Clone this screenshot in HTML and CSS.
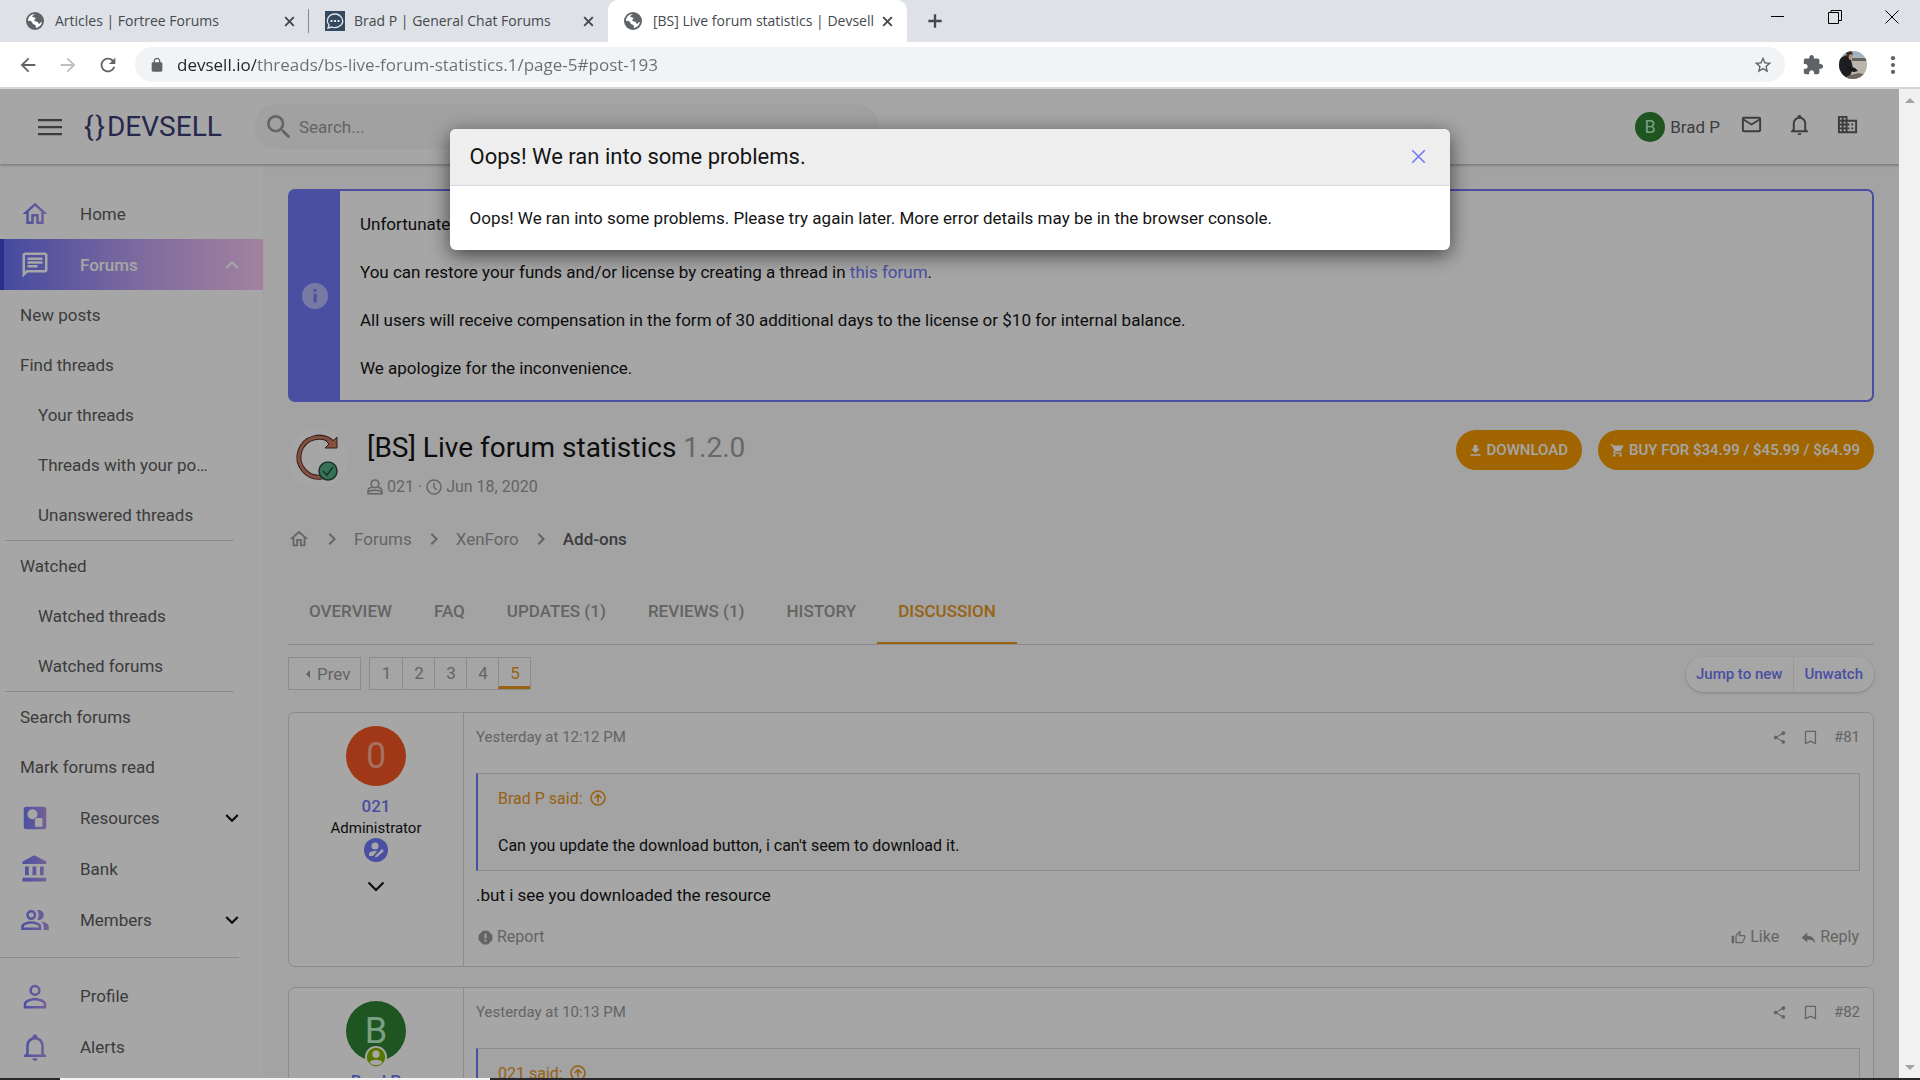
FILE: index.html
```html
<!DOCTYPE html>
<html lang="en">
<head>
  <meta charset="UTF-8"/>
  <meta name="viewport" content="width=device-width, initial-scale=1.0"/>
  <title>[BS] Live forum statistics | Devsell</title>
  <link rel="stylesheet" href="styles.css">
</head>
<body>
<!-- icon set -->
<svg class="sprite" aria-hidden="true">
  <linearGradient id="navFill" x1="0" y1="0" x2="1" y2="0">
    <stop offset="0" stop-color="#727af9"/>
    <stop offset="1" stop-color="#b494e8"/>
  </linearGradient>
  <symbol id="globe" viewBox="0 0 24 24"><circle cx="12" cy="12" r="12"/><path fill="#fff" d="M12 2.600c-2 1.600-4 2.200-3.500 3.800.5 1.400 3.500.2 4 1.800.4 1.400-1.800 1.600-1.600 3.200.2 1.400 2.600.8 4 1.600 1.600 1 1.200 2.600 2.600 2.600s1.800-2.400 3.700-2.200c-.6 4-4 7.600-8.500 8 1-2 .6-3.400-.6-4.200-1.600-1-3-.6-3.600-2.400-.4-1.400-1.200-2.400-2.800-2.800l-3.100-.4C2.600 6.800 6.800 2.400 12 2.600z"/></symbol>
  <symbol id="cross" viewBox="0 0 24 24"><path fill="none" stroke="currentColor" stroke-width="3.600" d="M4 4l16 16M20 4L4 20"/></symbol>
  <symbol id="thincross" viewBox="0 0 24 24"><path fill="none" stroke="currentColor" stroke-width="2.600" d="M2 2l20 20M22 2L2 22"/></symbol>
  <symbol id="plus" viewBox="0 0 24 24"><path fill="none" stroke="currentColor" stroke-width="3.500" d="M12 2v20M2 12h20"/></symbol>
  <symbol id="back" viewBox="0 0 24 24"><path d="M20 11H7.830l5.590-5.590L12 4l-8 8 8 8 1.410-1.410L7.830 13H20v-2z"/></symbol>
  <symbol id="forward" viewBox="0 0 24 24"><path d="M12 4l-1.410 1.410L16.170 11H4v2h12.170l-5.580 5.590L12 20l8-8z"/></symbol>
  <symbol id="reload" viewBox="0 0 24 24"><path d="M17.650 6.350C16.200 4.900 14.210 4 12 4c-4.420 0-7.990 3.580-7.990 8s3.570 8 7.990 8c3.730 0 6.840-2.550 7.730-6h-2.080c-.82 2.330-3.040 4-5.650 4-3.310 0-6-2.690-6-6s2.690-6 6-6c1.660 0 3.140.69 4.220 1.780L13 11h7V4l-2.350 2.350z"/></symbol>
  <symbol id="lock" viewBox="0 0 24 24"><path d="M18 8h-1V6c0-2.760-2.240-5-5-5S7 3.240 7 6v2H6c-1.100 0-2 .9-2 2v10c0 1.100.9 2 2 2h12c1.100 0 2-.9 2-2V10c0-1.100-.9-2-2-2zm-2.900 0H8.900V6c0-1.710 1.390-3.100 3.100-3.100s3.100 1.390 3.100 3.100v2z"/></symbol>
  <symbol id="star" viewBox="0 0 24 24"><path d="M22 9.240l-7.190-.62L12 2 9.190 8.630 2 9.240l5.460 4.730L5.820 21 12 17.270 18.180 21l-1.630-7.030L22 9.240zM12 15.400l-3.760 2.270 1-4.280-3.320-2.880 4.380-.38L12 6.100l1.710 4.040 4.380.38-3.320 2.880 1 4.280L12 15.400z"/></symbol>
  <symbol id="puzzle" viewBox="0 0 24 24"><path d="M20.500 11H19V7c0-1.100-.9-2-2-2h-4V3.500C13 2.120 11.880 1 10.500 1S8 2.120 8 3.500V5H4c-1.100 0-1.990.9-1.990 2v3.800H3.500c1.490 0 2.700 1.210 2.700 2.700s-1.210 2.700-2.700 2.700H2V20c0 1.100.9 2 2 2h3.800v-1.500c0-1.490 1.210-2.700 2.700-2.700s2.700 1.210 2.700 2.700V22H17c1.100 0 2-.9 2-2v-4h1.500c1.380 0 2.500-1.120 2.500-2.500S21.880 11 20.500 11z"/></symbol>
  <symbol id="dots" viewBox="0 0 24 24"><circle cx="12" cy="4.500" r="2.300"/><circle cx="12" cy="12" r="2.300"/><circle cx="12" cy="19.500" r="2.300"/></symbol>
  <symbol id="home" viewBox="0 0 24 24"><path d="M12 5.690l5 4.500V18h-2v-6H9v6H7v-7.810l5-4.500M12 3L2 12h3v8h6v-6h2v6h6v-8h3L12 3z"/></symbol>
  <symbol id="chat" viewBox="0 0 24 24"><path d="M20 2H4c-1.100 0-2 .9-2 2v18l4-4h14c1.100 0 2-.9 2-2V4c0-1.100-.9-2-2-2zm0 14H5.200L4 17.200V4h16v12zM6 12h8v2H6zm0-3h12v2H6zm0-3h12v2H6z"/></symbol>
  <symbol id="shapes" viewBox="0 0 24 24"><path fill-rule="evenodd" d="M5 3h14a2 2 0 0 1 2 2v14a2 2 0 0 1-2 2H5a2 2 0 0 1-2-2V5a2 2 0 0 1 2-2zM10 5a4 4 0 1 0 0 8 4 4 0 0 0 0-8zM12 13v6h6v-7h-4.500z"/></symbol>
  <symbol id="bank" viewBox="0 0 24 24"><path d="M4 10v7h3v-7H4zm6 0v7h3v-7h-3zM2 22h19v-3H2v3zm14-12v7h3v-7h-3zm-4.500-9L2 6v2h19V6l-9.500-5z"/></symbol>
  <symbol id="people" viewBox="0 0 24 24"><path d="M16.670 13.130C18.040 14.060 19 15.320 19 17v3h4v-3c0-2.180-3.570-3.470-6.330-3.870zM9 12c2.210 0 4-1.790 4-4s-1.790-4-4-4-4 1.790-4 4 1.790 4 4 4zm0-6c1.100 0 2 .9 2 2s-.9 2-2 2-2-.9-2-2 .9-2 2-2zM15 12c2.210 0 4-1.790 4-4s-1.790-4-4-4c-.47 0-.91.100-1.330.24C14.500 5.270 15 6.580 15 8s-.5 2.730-1.330 3.760c.42.140.86.240 1.330.24zM9 13c-2.670 0-8 1.340-8 4v3h16v-3c0-2.660-5.330-4-8-4zm6 5H3v-.99C3.200 16.290 6.300 15 9 15s5.800 1.290 6 2v1z"/></symbol>
  <symbol id="person" viewBox="0 0 24 24"><path d="M12 3a4.500 4.500 0 1 0 0 9 4.500 4.500 0 0 0 0-9zm0 2a2.500 2.500 0 1 1 0 5 2.500 2.500 0 0 1 0-5zm0 8.500c-4 0-9 1.700-9 5V22h18v-3.500c0-3.300-5-5-9-5zm0 2c3.500 0 7 1.500 7 3V20H5v-1.500c0-1.500 3.500-3 7-3z"/></symbol>
  <symbol id="bell" viewBox="0 0 24 24"><path d="M10 21h4a2 2 0 0 1-4 0zM21 19v1H3v-1l2-2v-6c0-3.100 2.030-5.830 5-6.710V4a2 2 0 0 1 4 0v.29c2.970.88 5 3.610 5 6.710v6l2 2m-4-8a5 5 0 0 0-10 0v7h10v-7z"/></symbol>
  <symbol id="down" viewBox="0 0 24 24"><path d="M7.410 8.590L12 13.170l4.590-4.580L18 10l-6 6-6-6z"/></symbol>
  <symbol id="thindown" viewBox="0 0 24 24"><path fill="none" stroke="currentColor" stroke-width="2.800" d="M2 6l10 10L22 6"/></symbol>
  <symbol id="up" viewBox="0 0 24 24"><path d="M7.410 15.410L12 10.830l4.590 4.580L18 14l-6-6-6 6z"/></symbol>
  <symbol id="right" viewBox="0 0 24 24"><path d="M8.590 16.590L13.170 12 8.590 7.410 10 6l6 6-6 6z"/></symbol>
  <symbol id="search" viewBox="0 0 24 24"><path d="M15.500 14h-.79l-.28-.27A6.470 6.470 0 0 0 16 9.500 6.500 6.500 0 1 0 9.500 16c1.610 0 3.090-.59 4.230-1.570l.27.280v.79l5 4.990L20.490 19l-4.990-5zm-6 0C7.010 14 5 11.990 5 9.500S7.010 5 9.500 5 14 7.010 14 9.500 11.990 14 9.500 14z"/></symbol>
  <symbol id="menu" viewBox="0 0 24 24"><path d="M0 4h24v2.200H0zM0 11h24v2.200H0zM0 18h24v2.200H0z"/></symbol>
  <symbol id="mail" viewBox="0 0 24 24"><path d="M20 4H4c-1.100 0-2 .9-2 2v12c0 1.100.9 2 2 2h16c1.100 0 2-.9 2-2V6c0-1.100-.9-2-2-2zm0 14H4V8l8 5 8-5v10zm-8-7L4 6h16l-8 5z"/></symbol>
  <symbol id="building" viewBox="0 0 24 24"><path d="M12 7V3H2v18h20V7H12zM6 19H4v-2h2v2zm0-4H4v-2h2v2zm0-4H4V9h2v2zm0-4H4V5h2v2zm4 12H8v-2h2v2zm0-4H8v-2h2v2zm0-4H8V9h2v2zm0-4H8V5h2v2zm10 12h-8v-2h2v-2h-2v-2h2v-2h-2V9h8v10zm-2-8h-2v2h2v-2zm0 4h-2v2h2v-2z"/></symbol>
  <symbol id="info" viewBox="0 0 24 24"><path d="M12 0a12 12 0 1 0 0 24 12 12 0 0 0 0-24zm1.500 18h-2.800v-8h2.800v8zm0-10h-2.800V5.500h2.800V8z"/></symbol>
  <symbol id="user" viewBox="0 0 24 24"><path fill="none" stroke="currentColor" stroke-width="2.200" d="M12 1.500a5.800 5.800 0 1 0 0 11.600 5.800 5.800 0 0 0 0-11.600zM7.500 12.500c-3.500.5-6 2.500-6 6v3.500h21v-3.500c0-3.500-2.500-5.500-6-6M2.500 19c6-2.600 13-2.600 19 0"/></symbol>
  <symbol id="clock" viewBox="0 0 24 24"><path fill="none" stroke="currentColor" stroke-width="2.200" d="M12 1.500a10.500 10.500 0 1 0 0 21 10.500 10.500 0 0 0 0-21zM12 5.500v7l4 3.500"/></symbol>
  <symbol id="download" viewBox="0 0 24 24"><path d="M19 9h-4V3H9v6H5l7 7 7-7zM4 18v2.500h16V18H4z"/></symbol>
  <symbol id="cart" viewBox="0 0 24 24"><path d="M7 18a2 2 0 1 0 0 4 2 2 0 0 0 0-4zM1 2v2h2l3.600 7.590-1.350 2.450C4.520 15.370 5.480 17 7 17h12v-2H7.420l1.130-2h7.450c.75 0 1.410-.41 1.750-1.030L21.700 4H5.210l-.94-2H1zm16 16a2 2 0 1 0 0 4 2 2 0 0 0 0-4z"/></symbol>
  <symbol id="share" viewBox="0 0 24 24"><path d="M18 16.080c-.76 0-1.440.3-1.960.77L8.910 12.700c.05-.23.090-.46.090-.7s-.04-.47-.09-.7l7.050-4.110A3 3 0 1 0 15 5c0 .24.040.47.090.7L8.040 9.810a3 3 0 1 0 0 4.380l7.120 4.160c-.05.210-.08.430-.08.650a2.920 2.920 0 1 0 2.920-2.920z"/></symbol>
  <symbol id="bookmark" viewBox="0 0 24 24"><path d="M19 1H5c-1.100 0-2 .9-2 2v20l9-4 9 4V3c0-1.100-.9-2-2-2zm0 19l-7-3.200L5 20V3h14v17z"/></symbol>
  <symbol id="jump" viewBox="0 0 24 24"><path fill="none" stroke="currentColor" stroke-width="2.400" d="M12 1.500a10.500 10.500 0 1 0 0 21 10.500 10.500 0 0 0 0-21zM12 18.500V7M7 12l5-5 5 5"/></symbol>
  <symbol id="alert" viewBox="0 0 24 24"><path fill-rule="evenodd" d="M8 1h8l7 7v8l-7 7H8l-7-7V8zM10.500 5.500v8h3v-8zM10.500 15.500v3h3v-3z"/></symbol>
  <symbol id="thumb" viewBox="0 0 24 24"><path d="M9 21h9c.83 0 1.540-.5 1.840-1.220l3.020-7.050c.09-.23.140-.47.140-.73v-2c0-1.100-.9-2-2-2h-6.310l.95-4.570.03-.32c0-.41-.17-.79-.44-1.060L14.170 1 7.580 7.590C7.220 7.950 7 8.450 7 9v10c0 1.100.9 2 2 2zM9 9l4.340-4.340L12 10h9v2l-3 7H9V9zM1 9h4v12H1z"/></symbol>
  <symbol id="reply" viewBox="0 0 24 24"><path d="M10 9V4l-9 8 9 8v-5c5.500 0 10 1.500 13 6-1-7-5-12-13-12z"/></symbol>
</svg>

<div class="tab-strip">
  <div class="browser-tab">
    <svg class="favicon"><use href="#globe"/></svg>
    <span class="tab-title">Articles | Fortree Forums</span>
    <button class="tab-close" aria-label="Close tab"><svg><use href="#cross"/></svg></button>
  </div>
  <div class="browser-tab second">
    <svg class="favicon" viewBox="0 0 20 20"><path fill="#34495e" d="M0 0h20v20H0z"/><path fill="none" stroke="#dfe6ec" stroke-width="1.300" d="M4 14c-4-5 0-11 6-11s10 7 6 11c-3 3-7 3-9 2l-4 1z"/><path fill="none" stroke="#dfe6ec" stroke-width="2" stroke-dasharray="2 1.500" d="M5.500 10h10"/></svg>
    <span class="tab-title">Brad P | General Chat Forums</span>
    <button class="tab-close" aria-label="Close tab"><svg><use href="#cross"/></svg></button>
  </div>
  <div class="browser-tab current">
    <svg class="favicon"><use href="#globe"/></svg>
    <span class="tab-title">[BS] Live forum statistics | Devsell</span>
    <button class="tab-close" aria-label="Close tab"><svg><use href="#cross"/></svg></button>
  </div>
  <button class="new-tab" aria-label="New tab"><svg><use href="#plus"/></svg></button>
  <div class="window-controls">
    <button aria-label="Minimize"><svg viewBox="0 0 14 14"><path d="M0 6.500h13"/></svg></button>
    <button aria-label="Restore"><svg viewBox="0 0 14 14"><path d="M.5 2.500h10v11H.5zM3 2V.5h10.500v10H11"/></svg></button>
    <button aria-label="Close"><svg viewBox="0 0 14 14"><path d="M.5.5l13 13M13.500.5l-13 13"/></svg></button>
  </div>
</div>

<div class="toolbar">
  <button aria-label="Back"><svg><use href="#back"/></svg></button>
  <button aria-label="Forward" class="off"><svg><use href="#forward"/></svg></button>
  <button aria-label="Reload"><svg><use href="#reload"/></svg></button>
  <div class="omnibox">
    <svg class="lock"><use href="#lock"/></svg>
    <input type="text" aria-label="Address" value="devsell.io/threads/bs-live-forum-statistics.1/page-5#post-193">
    <svg class="star"><use href="#star"/></svg>
  </div>
  <button aria-label="Extensions"><svg class="ext"><use href="#puzzle"/></svg></button>
  <button aria-label="Profile"><svg class="photo" viewBox="0 0 28 28">
    <clipPath id="round"><circle cx="14" cy="14" r="14"/></clipPath>
    <g clip-path="url(#round)"><path fill="#b9b5aa" d="M0 0h28v28H0z"/><path fill="#9db2c4" d="M0 0h28v6H0z"/><path fill="#5f6462" d="M13 7h15v3H13z"/><path fill="#1c1e22" d="M0 8l7-4 5 5 2 8-4 11H0z"/><path fill="#3b2a22" d="M7 1l5-1 2 3-2 3H8z"/><path fill="#b98d72" d="M10 4l3-1v4l-3 2z"/><path fill="#16181b" d="M8 15l8 2 3 3-4 1-8-2z"/><path fill="#6d665c" d="M8 25l12-3 8 2v4H8z"/></g>
  </svg></button>
  <button aria-label="Menu"><svg><use href="#dots"/></svg></button>
</div>

<div class="viewport">
  <div class="page">
    <header class="site-header">
      <button class="menu-button" aria-label="Menu"><svg><use href="#menu"/></svg></button>
      <a href="#" class="logo"><span>{</span><span>}</span>DEVSELL</a>
      <div class="search-box">
        <svg><use href="#search"/></svg>
        <input type="search" placeholder="Search..." aria-label="Search">
      </div>
      <div class="user-nav">
        <a href="#" class="me"><span class="avatar small green">B</span>Brad P</a>
        <a href="#" class="nav-icon" aria-label="Messages"><svg><use href="#mail"/></svg></a>
        <a href="#" class="nav-icon" aria-label="Alerts"><svg><use href="#bell"/></svg></a>
        <a href="#" class="nav-icon" aria-label="Companies"><svg><use href="#building"/></svg></a>
      </div>
    </header>

    <div class="columns">
      <nav class="side-nav">
        <a href="#" class="nav-item"><svg><use href="#home"/></svg><span>Home</span></a>
        <a href="#" class="nav-item selected"><svg><use href="#chat"/></svg><span>Forums</span><svg class="arrow"><use href="#up"/></svg></a>
        <a href="#" class="sub-item">New posts</a>
        <a href="#" class="sub-item">Find threads</a>
        <a href="#" class="sub-item deep">Your threads</a>
        <a href="#" class="sub-item deep">Threads with your posts</a>
        <a href="#" class="sub-item deep">Unanswered threads</a>
        <hr class="sub-line">
        <a href="#" class="sub-item">Watched</a>
        <a href="#" class="sub-item deep">Watched threads</a>
        <a href="#" class="sub-item deep">Watched forums</a>
        <hr class="sub-line">
        <a href="#" class="sub-item">Search forums</a>
        <a href="#" class="sub-item">Mark forums read</a>
        <a href="#" class="nav-item"><svg><use href="#shapes"/></svg><span>Resources</span><svg class="arrow"><use href="#down"/></svg></a>
        <a href="#" class="nav-item"><svg><use href="#bank"/></svg><span>Bank</span></a>
        <a href="#" class="nav-item"><svg><use href="#people"/></svg><span>Members</span><svg class="arrow"><use href="#down"/></svg></a>
        <hr class="main-line">
        <a href="#" class="nav-item"><svg><use href="#person"/></svg><span>Profile</span></a>
        <a href="#" class="nav-item"><svg><use href="#bell"/></svg><span>Alerts</span></a>
      </nav>

      <main class="content">
        <div class="notice">
          <div class="notice-icon"><svg><use href="#info"/></svg></div>
          <div class="notice-text">
            <p>Unfortunately,</p>
            <p>You can restore your funds and/or license by creating a thread in <a href="#">this forum</a>.</p>
            <p>All users will receive compensation in the form of 30 additional days to the license or $10 for internal balance.</p>
            <p>We apologize for the inconvenience.</p>
          </div>
        </div>

        <div class="resource-head">
          <svg class="resource-icon" viewBox="0 0 60 60">
            <circle cx="30" cy="30" r="30" fill="#fff"/>
            <path fill="none" stroke="#4a3330" stroke-width="5" d="M45 15A20 20 0 1 0 34 49"/>
            <path fill="#d07a60" stroke="#4a3330" d="M49 9v11H37l4-4-4-4 6 1 3-1z"/>
            <path fill="none" stroke="#d07a60" stroke-width="3" d="M45 15A20 20 0 1 0 34 49"/>
            <circle cx="40" cy="43" r="9" fill="#52b183" stroke="#2d4a44" stroke-width="1.500"/>
            <path fill="none" stroke="#2d4a44" stroke-width="1.500" d="M35 43l4 4 6-8"/>
          </svg>
          <div class="resource-title">
            <h1>[BS] Live forum statistics <span>1.2.0</span></h1>
            <div class="byline"><svg><use href="#user"/></svg> 021 · <svg><use href="#clock"/></svg> Jun 18, 2020</div>
          </div>
          <div class="buy-buttons">
            <button><svg><use href="#download"/></svg>DOWNLOAD</button>
            <button><svg><use href="#cart"/></svg>BUY FOR $34.99 / $45.99 / $64.99</button>
          </div>
        </div>

        <nav class="breadcrumbs">
          <a href="#" aria-label="Home"><svg class="crumb-home"><use href="#home"/></svg></a>
          <svg><use href="#right"/></svg><a href="#">Forums</a>
          <svg><use href="#right"/></svg><a href="#">XenForo</a>
          <svg><use href="#right"/></svg><a href="#" class="last">Add-ons</a>
        </nav>

        <nav class="tabs">
          <a href="#">OVERVIEW</a>
          <a href="#">FAQ</a>
          <a href="#">UPDATES (1)</a>
          <a href="#">REVIEWS (1)</a>
          <a href="#">HISTORY</a>
          <a href="#" class="active">DISCUSSION</a>
        </nav>

        <div class="list-bar">
          <a href="#" class="prev"><i></i>Prev</a>
          <div class="pages">
            <a href="#">1</a><a href="#">2</a><a href="#">3</a><a href="#">4</a><a href="#" class="active">5</a>
          </div>
          <div class="thread-buttons"><button>Jump to new</button><button>Unwatch</button></div>
        </div>

        <article class="post">
          <div class="post-user">
            <span class="avatar red">0</span>
            <a href="#" class="user-name">021</a>
            <span class="user-role">Administrator</span>
            <svg class="staff-badge" viewBox="0 0 24 24"><circle cx="12" cy="12" r="12" fill="#727af9"/><g fill="#fff"><circle cx="11" cy="8" r="3.500"/><path d="M5 18v-2c0-2 3-3 6-3h2l-4 5zM11 18l7-7 2 2-7 6h-2z"/></g></svg>
            <svg class="more"><use href="#thindown"/></svg>
          </div>
          <div class="post-main">
            <div class="post-meta"><span>Yesterday at 12:12 PM</span><a href="#" aria-label="Share"><svg><use href="#share"/></svg></a><a href="#" aria-label="Bookmark"><svg><use href="#bookmark"/></svg></a><a href="#">#81</a></div>
            <blockquote>
              <a href="#">Brad P said: <svg><use href="#jump"/></svg></a>
              <p>Can you update the download button, i can't seem to download it.</p>
            </blockquote>
            <p class="message">.but i see you downloaded the resource</p>
            <div class="post-actions">
              <a href="#"><svg><use href="#alert"/></svg>Report</a>
              <a href="#" class="like"><svg><use href="#thumb"/></svg>Like</a>
              <a href="#"><svg><use href="#reply"/></svg>Reply</a>
            </div>
          </div>
        </article>

        <article class="post">
          <div class="post-user">
            <span class="avatar green">B
              <svg class="online" viewBox="0 0 24 24"><circle cx="12" cy="12" r="12" fill="#fff"/><circle cx="12" cy="12" r="10" fill="#85b600"/><g fill="#fff"><circle cx="12" cy="9" r="4"/><path d="M5 18c1-4 13-4 14 0-3 4-11 4-14 0z"/></g></svg>
            </span>
            <a href="#" class="user-name">Brad P</a>
          </div>
          <div class="post-main">
            <div class="post-meta"><span>Yesterday at 10:13 PM</span><a href="#" aria-label="Share"><svg><use href="#share"/></svg></a><a href="#" aria-label="Bookmark"><svg><use href="#bookmark"/></svg></a><a href="#">#82</a></div>
            <blockquote>
              <a href="#">021 said: <svg><use href="#jump"/></svg></a>
            </blockquote>
          </div>
        </article>
      </main>
    </div>

    <!-- error dialog -->
    <div class="overlay">
      <div class="dialog" role="dialog" aria-labelledby="dialogTitle">
        <div class="dialog-head">
          <h2 id="dialogTitle">Oops! We ran into some problems.</h2>
          <button aria-label="Close"><svg><use href="#thincross"/></svg></button>
        </div>
        <div class="dialog-body">Oops! We ran into some problems. Please try again later. More error details may be in the browser console.</div>
      </div>
    </div>
  </div>
  <div class="scrollbar"><i class="scroll-up"></i><i class="scroll-down"></i></div>
</div>
<div class="taskbar"><span></span></div>
</body>
</html>
```
FILE: styles.css
```css
* {
  box-sizing: border-box;
}
body {
  margin: 0;
  height: 100vh;
  display: flex;
  flex-direction: column;
  overflow: hidden;
  font-family: Roboto, sans-serif;
  font-size: 17px;
  color: #141414;
}
a {
  color: inherit;
  text-decoration: none;
}
button {
  font: inherit;
  color: inherit;
  background: none;
  border: none;
  padding: 0;
}
input {
  font: inherit;
  border: none;
  outline: none;
  background: none;
  padding: 0;
}
p, h1, h2 {
  margin: 0;
}
svg {
  fill: currentColor;
  flex-shrink: 0;
}
.sprite {
  position: absolute;
  width: 0;
  height: 0;
}

/* browser tabs */
.tab-strip {
  display: flex;
  flex-shrink: 0;
  height: 42px;
  padding-left: 10px;
  background-color: #dee1e6;
  font-family: "Open Sans", sans-serif;
  font-size: 14px;
  color: #45494d;
}
.browser-tab {
  display: flex;
  align-items: center;
  width: 299px;
  padding: 0 13px 0 16px;
}
.browser-tab:first-child {
  background: linear-gradient(#85888c, #85888c) right center / 1px 24px no-repeat;
}
.browser-tab.current {
  background-color: #fff;
  border-radius: 10px 10px 0 0;
}
.favicon {
  width: 18px;
  height: 18px;
  margin-right: 11px;
  color: #5f6368;
}
.second .favicon {
  width: 20px;
  height: 20px;
  margin-right: 9px;
}
.tab-title {
  flex: 1;
  padding-bottom: 2px;
  white-space: nowrap;
  overflow: hidden;
}
.tab-close svg {
  display: block;
  width: 13px;
  height: 13px;
}
.new-tab {
  width: 56px;
}
.new-tab svg {
  display: block;
  width: 16px;
  height: 16px;
  margin: 0 auto;
}
.window-controls {
  display: flex;
  margin-left: auto;
}
.window-controls button {
  width: 57px;
  padding-bottom: 5px;
}
.window-controls svg {
  width: 14px;
  height: 14px;
  fill: none;
  stroke: #000;
}

.toolbar {
  display: flex;
  align-items: center;
  flex-shrink: 0;
  height: 47px;
  padding: 0 7px 0 8px;
  border-bottom: 2px solid #d4d6d8;
  background-color: #fff;
  color: #5f6368;
}
.toolbar button {
  width: 40px;
  display: flex;
  justify-content: center;
}
.toolbar svg {
  width: 22px;
  height: 22px;
}
.toolbar .off {
  color: #bcbec1;
}
.toolbar .photo {
  width: 28px;
  height: 28px;
}
.omnibox {
  display: flex;
  align-items: center;
  flex: 1;
  height: 35px;
  margin: 0 8px 0 7px;
  padding: 0 12px 0 14px;
  border-radius: 18px;
  background-color: #f1f3f4;
}
.omnibox input {
  flex: 1;
  margin-left: 12px;
  font-family: "Open Sans", sans-serif;
  font-size: 17px;
  color: transparent;
  background: linear-gradient(90deg, #202124 79px, #6a6e73 79px);
  background-clip: text;
  -webkit-background-clip: text;
}
.toolbar .lock {
  width: 16px;
  height: 16px;
}
.toolbar .star {
  width: 20px;
  height: 20px;
}

.viewport {
  display: flex;
  flex: 1;
  min-height: 0;
}
.page {
  position: relative;
  flex: 1;
  min-width: 0;
  overflow: hidden;
  background-color: #fafafa;
}
.scrollbar {
  display: flex;
  flex-direction: column;
  justify-content: space-between;
  align-items: center;
  width: 21px;
  padding: 9px 0 8px;
  background-color: #f1f1f1;
}
.scroll-up {
  border: 5px solid transparent;
  border-top: none;
  border-bottom-color: #a3a3a3;
}
.scroll-down {
  border: 5px solid transparent;
  border-bottom: none;
  border-top-color: #a3a3a3;
}

/* site header */
.site-header {
  display: flex;
  align-items: center;
  height: 75px;
  padding: 0 40px 0 38px;
  background-color: #fff;
  box-shadow: 0 1px 3px rgba(0,0,0,0.35);
  position: relative;
  color: #5c5c5c;
}
.menu-button svg {
  display: block;
  width: 24px;
  height: 24px;
}
.logo {
  width: 170px;
  margin-left: 22px;
  font-size: 28px;
  color: #3b3c75;
}
.logo span {
  margin-right: 2px;
}
.search-box {
  display: flex;
  align-items: center;
  width: 625px;
  height: 45px;
  padding: 0 9px;
  border-radius: 23px;
  background-color: #f7f7f7;
  color: #9a9a9a;
}
.search-box svg {
  width: 32px;
  height: 32px;
  margin-right: 4px;
}
.search-box input {
  flex: 1;
}
.search-box input::placeholder {
  color: #9a9a9a;
}
.user-nav {
  display: flex;
  align-items: center;
  gap: 20px;
  margin-left: auto;
}
.nav-icon {
  padding-bottom: 4px;
}
.nav-icon + .nav-icon {
  margin-left: 5px;
}
.user-nav svg {
  display: block;
  width: 23px;
  height: 23px;
}
.me {
  display: flex;
  align-items: center;
  gap: 5px;
}
.avatar {
  position: relative;
  display: flex;
  align-items: center;
  justify-content: center;
  width: 60px;
  height: 60px;
  border-radius: 50%;
  font-size: 36px;
}
.avatar.small {
  width: 30px;
  height: 30px;
  font-size: 18px;
}
.avatar.green {
  background-color: #308334;
  color: #b9f6ca;
}
.avatar.red {
  background-color: #f65522;
  color: #ffab91;
}
.online {
  position: absolute;
  left: 19px;
  bottom: -7px;
  width: 22px;
  height: 22px;
}

.columns {
  display: flex;
}
.side-nav {
  width: 263px;
  flex-shrink: 0;
  padding-top: 24px;
  background-color: #fff;
  color: #5c5c5c;
}
.nav-item {
  display: flex;
  align-items: center;
  height: 51px;
  padding: 0 18px 0 20px;
}
.nav-item svg {
  width: 30px;
  height: 30px;
  margin-right: 30px;
  fill: url(#navFill);
}
.nav-item span {
  flex: 1;
}
.nav-item .arrow {
  width: 26px;
  height: 26px;
  margin: 0;
  fill: #111;
}
.nav-item.selected {
  border-left: 4px solid #3f47d6;
  padding-left: 16px;
  background: linear-gradient(90deg, #6b73f5, #c5a6f5 55%, #fac8f5);
  color: #fff;
  font-weight: 500;
}
.nav-item.selected svg {
  fill: #fff;
}
.sub-item {
  display: block;
  width: 234px;
  height: 50px;
  line-height: 50px;
  padding: 0 20px;
  white-space: nowrap;
  overflow: hidden;
  text-overflow: ellipsis;
}
.sub-item.deep {
  padding-left: 38px;
}
.side-nav hr {
  height: 1px;
  margin: 0 29px 0 5px;
  border: none;
  background-color: #d8d8d8;
}
.side-nav .main-line {
  margin: 12px 24px 12px 0;
}

.content {
  flex: 1;
  min-width: 0;
  padding: 25px 25px 0;
}
.notice {
  display: flex;
  border: 2px solid #727af9;
  border-radius: 7px;
  background-color: #fff;
}
.notice-icon {
  display: flex;
  align-items: center;
  justify-content: center;
  width: 50px;
  background-color: #727af9;
}
.notice-icon svg {
  width: 26px;
  height: 26px;
  color: #b9bcfc;
}
.notice-text {
  padding: 21px 20px 20px;
  line-height: 24px;
}
.notice-text p + p {
  margin-top: 24px;
}
.notice-text a {
  color: #727af9;
}

.resource-head {
  display: flex;
  align-items: flex-start;
  margin-top: 26px;
}
.resource-icon {
  width: 60px;
  height: 60px;
  margin-right: 19px;
}
.resource-title h1 {
  font-size: 28px;
  font-weight: 400;
  line-height: 40px;
}
.resource-title h1 span {
  color: #a0a0a0;
}
.byline {
  display: flex;
  align-items: center;
  gap: 4px;
  margin-top: 7px;
  font-size: 16px;
  line-height: 24px;
  color: #9a9a9a;
}
.byline svg {
  width: 16px;
  height: 16px;
}
.buy-buttons {
  display: flex;
  gap: 16px;
  margin-left: auto;
  padding-top: 2px;
}
.buy-buttons button {
  display: flex;
  align-items: center;
  height: 40px;
  padding: 0 14px 0 12px;
  border-radius: 20px;
  background-color: #f69a00;
  color: #fff;
  font-size: 15px;
  font-weight: 500;
}
.buy-buttons svg {
  width: 15px;
  height: 15px;
  margin-right: 4px;
}

.breadcrumbs {
  display: flex;
  align-items: center;
  gap: 10px;
  margin-top: 28px;
  height: 24px;
  color: #9a9a9a;
}
.breadcrumbs svg {
  display: block;
  width: 24px;
  height: 24px;
}
.breadcrumbs .crumb-home {
  width: 22px;
  height: 22px;
}
.breadcrumbs .last {
  color: #5c5c5c;
  font-weight: 500;
}

.tabs {
  display: flex;
  margin-top: 28px;
  border-bottom: 1px solid #d8d8d8;
  font-weight: 500;
  color: #9a9a9a;
}
.tabs a {
  height: 65px;
  line-height: 65px;
  padding: 0 21px;
}
.tabs .active {
  color: #e8971d;
  border-bottom: 2px solid #e8971d;
}

.list-bar {
  display: flex;
  margin-top: 12px;
  color: #9a9a9a;
}
.prev {
  display: flex;
  align-items: center;
  height: 33px;
  padding: 0 10px 0 17px;
  margin-right: 8px;
  border: 1px solid #d8d8d8;
  background-color: #fdfdfd;
}
.prev i {
  border: 4px solid transparent;
  border-left: none;
  border-right-color: #9a9a9a;
  margin-right: 7px;
}
.pages {
  display: flex;
  height: 33px;
  border: 1px solid #d8d8d8;
  background-color: #fdfdfd;
}
.pages a {
  width: 32px;
  line-height: 30px;
  text-align: center;
}
.pages a + a {
  border-left: 1px solid #d8d8d8;
}
.pages .active {
  color: #e8971d;
  border-bottom: 3px solid #e8971d;
}
.thread-buttons {
  display: flex;
  height: 35px;
  margin-left: auto;
  border-radius: 18px;
  background-color: #fff;
  box-shadow: 0 1px 3px rgba(0,0,0,0.2);
  color: #727af9;
  font-size: 15px;
  font-weight: 500;
}
.thread-buttons button {
  padding: 0 11px 2px 10px;
}
.thread-buttons button + button {
  border-left: 1px solid #ececec;
}

.post {
  display: flex;
  min-height: 255px;
  margin-top: 20px;
  border: 1px solid #d8d8d8;
  border-radius: 7px;
  background-color: #fff;
}
.post-user {
  display: flex;
  flex-direction: column;
  align-items: center;
  width: 175px;
  flex-shrink: 0;
  padding-top: 13px;
  border-right: 1px solid #d8d8d8;
}
.user-name {
  margin-top: 8px;
  line-height: 24px;
  font-weight: 500;
  color: #727af9;
}
.user-role {
  font-size: 15px;
  line-height: 20px;
}
.staff-badge {
  width: 24px;
  height: 24px;
}
.more {
  width: 18px;
  height: 18px;
  margin-top: 16px;
}
.post-main {
  flex: 1;
  min-width: 0;
  padding: 12px 13px 0 12px;
}
.post-meta {
  display: flex;
  align-items: center;
  gap: 16px;
  height: 24px;
  font-size: 15px;
  color: #9a9a9a;
}
.post-meta span {
  flex: 1;
}
.post-meta svg {
  display: block;
  width: 15px;
  height: 15px;
}
blockquote {
  margin: 24px 0 0;
  height: 98px;
  padding: 12px 20px;
  border: 1px solid #d8d8d8;
  border-left: 2px solid #727af9;
  background-color: #fafafa;
  font-size: 16px;
}
blockquote a {
  display: flex;
  align-items: center;
  gap: 7px;
  height: 24px;
  color: #e8971d;
}
blockquote svg {
  width: 16px;
  height: 16px;
}
blockquote p {
  margin-top: 24px;
  line-height: 24px;
}
.message {
  margin-top: 12px;
  line-height: 24px;
}
.post-actions {
  display: flex;
  gap: 22px;
  margin-top: 18px;
  padding: 0 1px 0 2px;
  font-size: 16px;
  line-height: 24px;
  color: #9a9a9a;
}
.post-actions a {
  display: flex;
  align-items: center;
  gap: 4px;
}
.post-actions svg {
  width: 15px;
  height: 15px;
}
.like {
  margin-left: auto;
}

.overlay {
  position: absolute;
  top: 0; left: 0; right: 0; bottom: 0;
  padding-top: 40px;
  background-color: rgba(0,0,0,0.35);
}
.dialog {
  max-width: 1000px;
  margin: 0 auto;
  border-radius: 6px;
  background-color: #fff;
  box-shadow: 0 5px 20px rgba(0,0,0,0.6);
}
.dialog-head {
  display: flex;
  align-items: center;
  justify-content: space-between;
  height: 57px;
  padding: 0 24px 2px 20px;
  border-bottom: 1px solid #d8d8d8;
  border-radius: 6px 6px 0 0;
  background-color: #eee;
}
.dialog-head h2 {
  font-size: 22px;
  font-weight: 400;
}
.dialog-head svg {
  display: block;
  width: 15px;
  height: 15px;
  color: #727af9;
}
.dialog-body {
  padding: 20px;
  line-height: 24px;
}

.taskbar {
  flex-shrink: 0;
  height: 2px;
  padding-left: 60px;
  background-color: #29272b;
}
.taskbar span {
  display: block;
  width: 430px;
  height: 2px;
  background-color: #f4f4f4;
}
```
